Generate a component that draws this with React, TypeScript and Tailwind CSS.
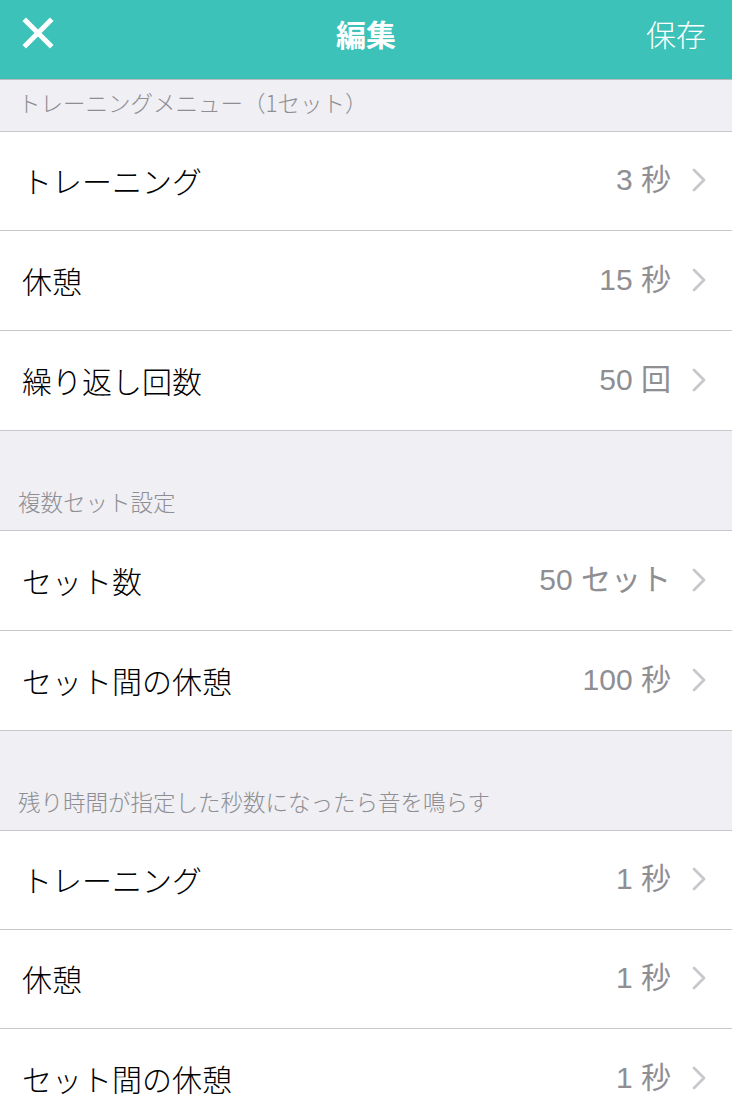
import React from "react";

const jp = '"Noto Sans CJK JP", sans-serif';
const val = '"Liberation Sans", "Noto Sans CJK JP", sans-serif';

function Chevron() {
  return (
    <svg width="16" height="24" viewBox="0 0 16 24" className="shrink-0">
      <polyline points="3,2 13,12 3,22" fill="none" stroke="#c7c7cc" strokeWidth="2.8" strokeLinecap="round" strokeLinejoin="round" />
    </svg>
  );
}

function Row({ label, value, first, h }: { label: string; value: string; first?: boolean; h: string }) {
  return (
    <div className={`flex ${h} items-center justify-between bg-white pb-[2px] pl-[22px] pr-[25px] ${first ? "" : "border-t border-[#c8c7cc]"}`}>
      <span className="text-[30px] font-light leading-[40px] text-black" style={{ fontFamily: jp }}>
        {label}
      </span>
      <div className="flex items-center gap-[20px]">
        <span className="text-[30px] leading-[40px] text-[#8e8e93]" style={{ fontFamily: val }}>
          {value}
        </span>
        <Chevron />
      </div>
    </div>
  );
}

function SectionHeader({ text, tall }: { text: string; tall?: boolean }) {
  return (
    <div className={`flex items-end bg-[#efeff4] px-[18px] pb-[15px] ${tall ? "h-[99px]" : "h-[51px]"}`}>
      <span className="text-[22.5px] font-light leading-[28px] text-[#8e8e93]" style={{ fontFamily: jp }}>
        {text}
      </span>
    </div>
  );
}

function Group({ rows }: { rows: [string, string, string][] }) {
  return (
    <div className="border-y border-[#c8c7cc]">
      {rows.map(([l, v, h], i) => (
        <Row key={i} label={l} value={v} h={h} first={i === 0} />
      ))}
    </div>
  );
}

export default function App() {
  return (
    <div className="h-[1111px] w-[732px] overflow-hidden bg-[#efeff4]" style={{ fontFamily: jp }}>
      <div className="relative flex h-[80px] items-center justify-between border-b border-[#b9bcbc] bg-[#3cc2b8] pb-[14px] pl-[22px] pr-[26px]">
        <svg width="32" height="32" viewBox="0 0 32 32">
          <line x1="4" y1="4" x2="28" y2="28" stroke="#fff" strokeWidth="5" strokeLinecap="square" />
          <line x1="28" y1="4" x2="4" y2="28" stroke="#fff" strokeWidth="5" strokeLinecap="square" />
        </svg>
        <span className="absolute left-1/2 top-[15px] -translate-x-1/2 text-[30px] font-bold leading-[36px] text-white">編集</span>
        <span className="text-[30px] font-light leading-[36px] text-white">保存</span>
      </div>
      <SectionHeader text="トレーニングメニュー（1セット）" />
      <Group
        rows={[
          ["トレーニング", "3 秒", "h-[98px]"],
          ["休憩", "15 秒", "h-[100px]"],
          ["繰り返し回数", "50 回", "h-[100px]"],
        ]}
      />
      <SectionHeader text="複数セット設定" tall />
      <Group
        rows={[
          ["セット数", "50 セット", "h-[99px]"],
          ["セット間の休憩", "100 秒", "h-[100px]"],
        ]}
      />
      <SectionHeader text="残り時間が指定した秒数になったら音を鳴らす" tall />
      <Group
        rows={[
          ["トレーニング", "1 秒", "h-[98px]"],
          ["休憩", "1 秒", "h-[99px]"],
          ["セット間の休憩", "1 秒", "h-[100px]"],
        ]}
      />
    </div>
  );
}
